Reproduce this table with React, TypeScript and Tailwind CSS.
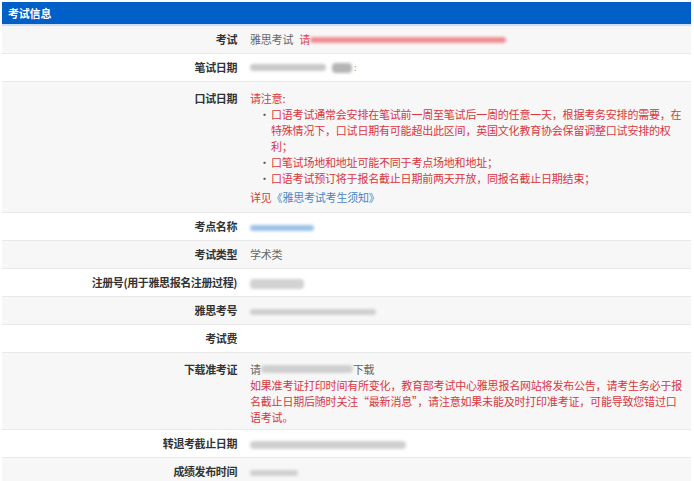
import React from "react";

type Row = {
  label: string;
  content: React.ReactNode;
  tall?: boolean;
};

// blurred placeholder for the masked values in the screenshot
function Smudge({ w, color = "bg-[#c9c9c9]", h = "h-[7px]" }: { w: string; color?: string; h?: string }) {
  return <span className={`inline-block ${w} ${h} ${color} rounded-sm blur-[1.5px] align-middle`} />;
}

function Bullet() {
  return <span className="w-[21px] shrink-0 pl-[9px] text-[#555]">•</span>;
}

const rows: Row[] = [
  {
    label: "考试",
    content: (
      <div className="flex items-center">
        <span className="text-[#666]">雅思考试</span>
        <span className="ml-[6px] text-[#e0454d]">请</span>
        <Smudge w="w-[196px]" color="bg-[#f08f93]" h="h-[6px]" />
      </div>
    ),
  },
  {
    label: "笔试日期",
    content: (
      <div className="flex items-center gap-[6px]">
        <Smudge w="w-[76px]" />
        <Smudge w="w-[20px]" color="bg-[#b5b5b5]" h="h-[10px]" />
        <span className="text-[#999] text-[9px] -ml-[4px]">:</span>
      </div>
    ),
  },
  {
    label: "口试日期",
    tall: true,
    content: (
      <div className="pt-[8px] pb-[7px] leading-[16px] text-[#d9363e]">
        <div>请注意:</div>
        <ul>
          <li className="flex">
            <Bullet />
            <span>
              <span className="block whitespace-nowrap">口语考试通常会安排在笔试前一周至笔试后一周的任意一天，根据考务安排的需要，在</span>
              <span className="block whitespace-nowrap">特殊情况下，口试日期有可能超出此区间，英国文化教育协会保留调整口试安排的权</span>
              <span className="block whitespace-nowrap">利；</span>
            </span>
          </li>
          <li className="flex">
            <Bullet />
            <span className="whitespace-nowrap">口笔试场地和地址可能不同于考点场地和地址；</span>
          </li>
          <li className="flex">
            <Bullet />
            <span className="whitespace-nowrap">口语考试预订将于报名截止日期前两天开放，同报名截止日期结束；</span>
          </li>
        </ul>
        <div className="mt-[3px]">
          详见<span className="text-[#4a86c5]">《雅思考试考生须知》</span>
        </div>
      </div>
    ),
  },
  { label: "考点名称", content: <Smudge w="w-[64px]" color="bg-[#9cc2e8]" h="h-[6px]" /> },
  { label: "考试类型", content: <span className="text-[#666]">学术类</span> },
  {
    label: "注册号(用于雅思报名注册过程)",
    content: <Smudge w="w-[54px]" color="bg-[#d2d2d2]" h="h-[10px]" />,
  },
  { label: "雅思考号", content: <Smudge w="w-[126px]" color="bg-[#cfcfcf]" h="h-[6px]" /> },
  { label: "考试费", content: null },
  {
    label: "下载准考证",
    tall: true,
    content: (
      <div className="pt-[8px] pb-[4px] leading-[16px]">
        <div className="flex items-center text-[#666]">
          <span>请</span>
          <Smudge w="w-[92px]" color="bg-[#cfcfcf]" h="h-[8px]" />
          <span>下载</span>
        </div>
        <div className="text-[#d9363e]">
          <span className="block whitespace-nowrap">如果准考证打印时间有所变化，教育部考试中心雅思报名网站将发布公告，请考生务必于报</span>
          <span className="block whitespace-nowrap">名截止日期后随时关注“最新消息”，请注意如果未能及时打印准考证，可能导致您错过口</span>
          <span className="block whitespace-nowrap">语考试。</span>
        </div>
      </div>
    ),
  },
  { label: "转退考截止日期", content: <Smudge w="w-[156px]" color="bg-[#d0d0d0]" h="h-[8px]" /> },
  { label: "成绩发布时间", content: <Smudge w="w-[48px]" color="bg-[#d0d0d0]" h="h-[6px]" /> },
];

export default function App() {
  return (
    <div
      className="w-[694px] h-[481px] overflow-hidden bg-white pl-[2px] pt-[2px] text-[11px] tracking-[-0.2px]"
      style={{ fontFamily: '"Noto Sans CJK SC", "Noto Sans", sans-serif' }}
    >
      <div className="w-[689px]">
        <div className="h-[24px] bg-[#0060c8] flex items-center pl-[6px] border-b-2 border-[#cfe0f3]">
          <span className="text-white font-bold text-[11px]">考试信息</span>
        </div>
        {rows.map((row, i) => (
          <div
            key={row.label}
            className={`flex border-b border-[#e9e9e9] ${i % 2 === 0 ? "bg-[#f7f7f7]" : "bg-white"} ${
              row.tall ? "" : "h-[28px] items-center"
            }`}
          >
            <div
              className={`w-[248px] shrink-0 pr-[13px] text-right font-bold text-[#333] tracking-[-0.4px] ${
                row.tall ? "pt-[8px] leading-[16px]" : ""
              }`}
            >
              {row.label}
            </div>
            <div className="flex-1">{row.content}</div>
          </div>
        ))}
      </div>
    </div>
  );
}
